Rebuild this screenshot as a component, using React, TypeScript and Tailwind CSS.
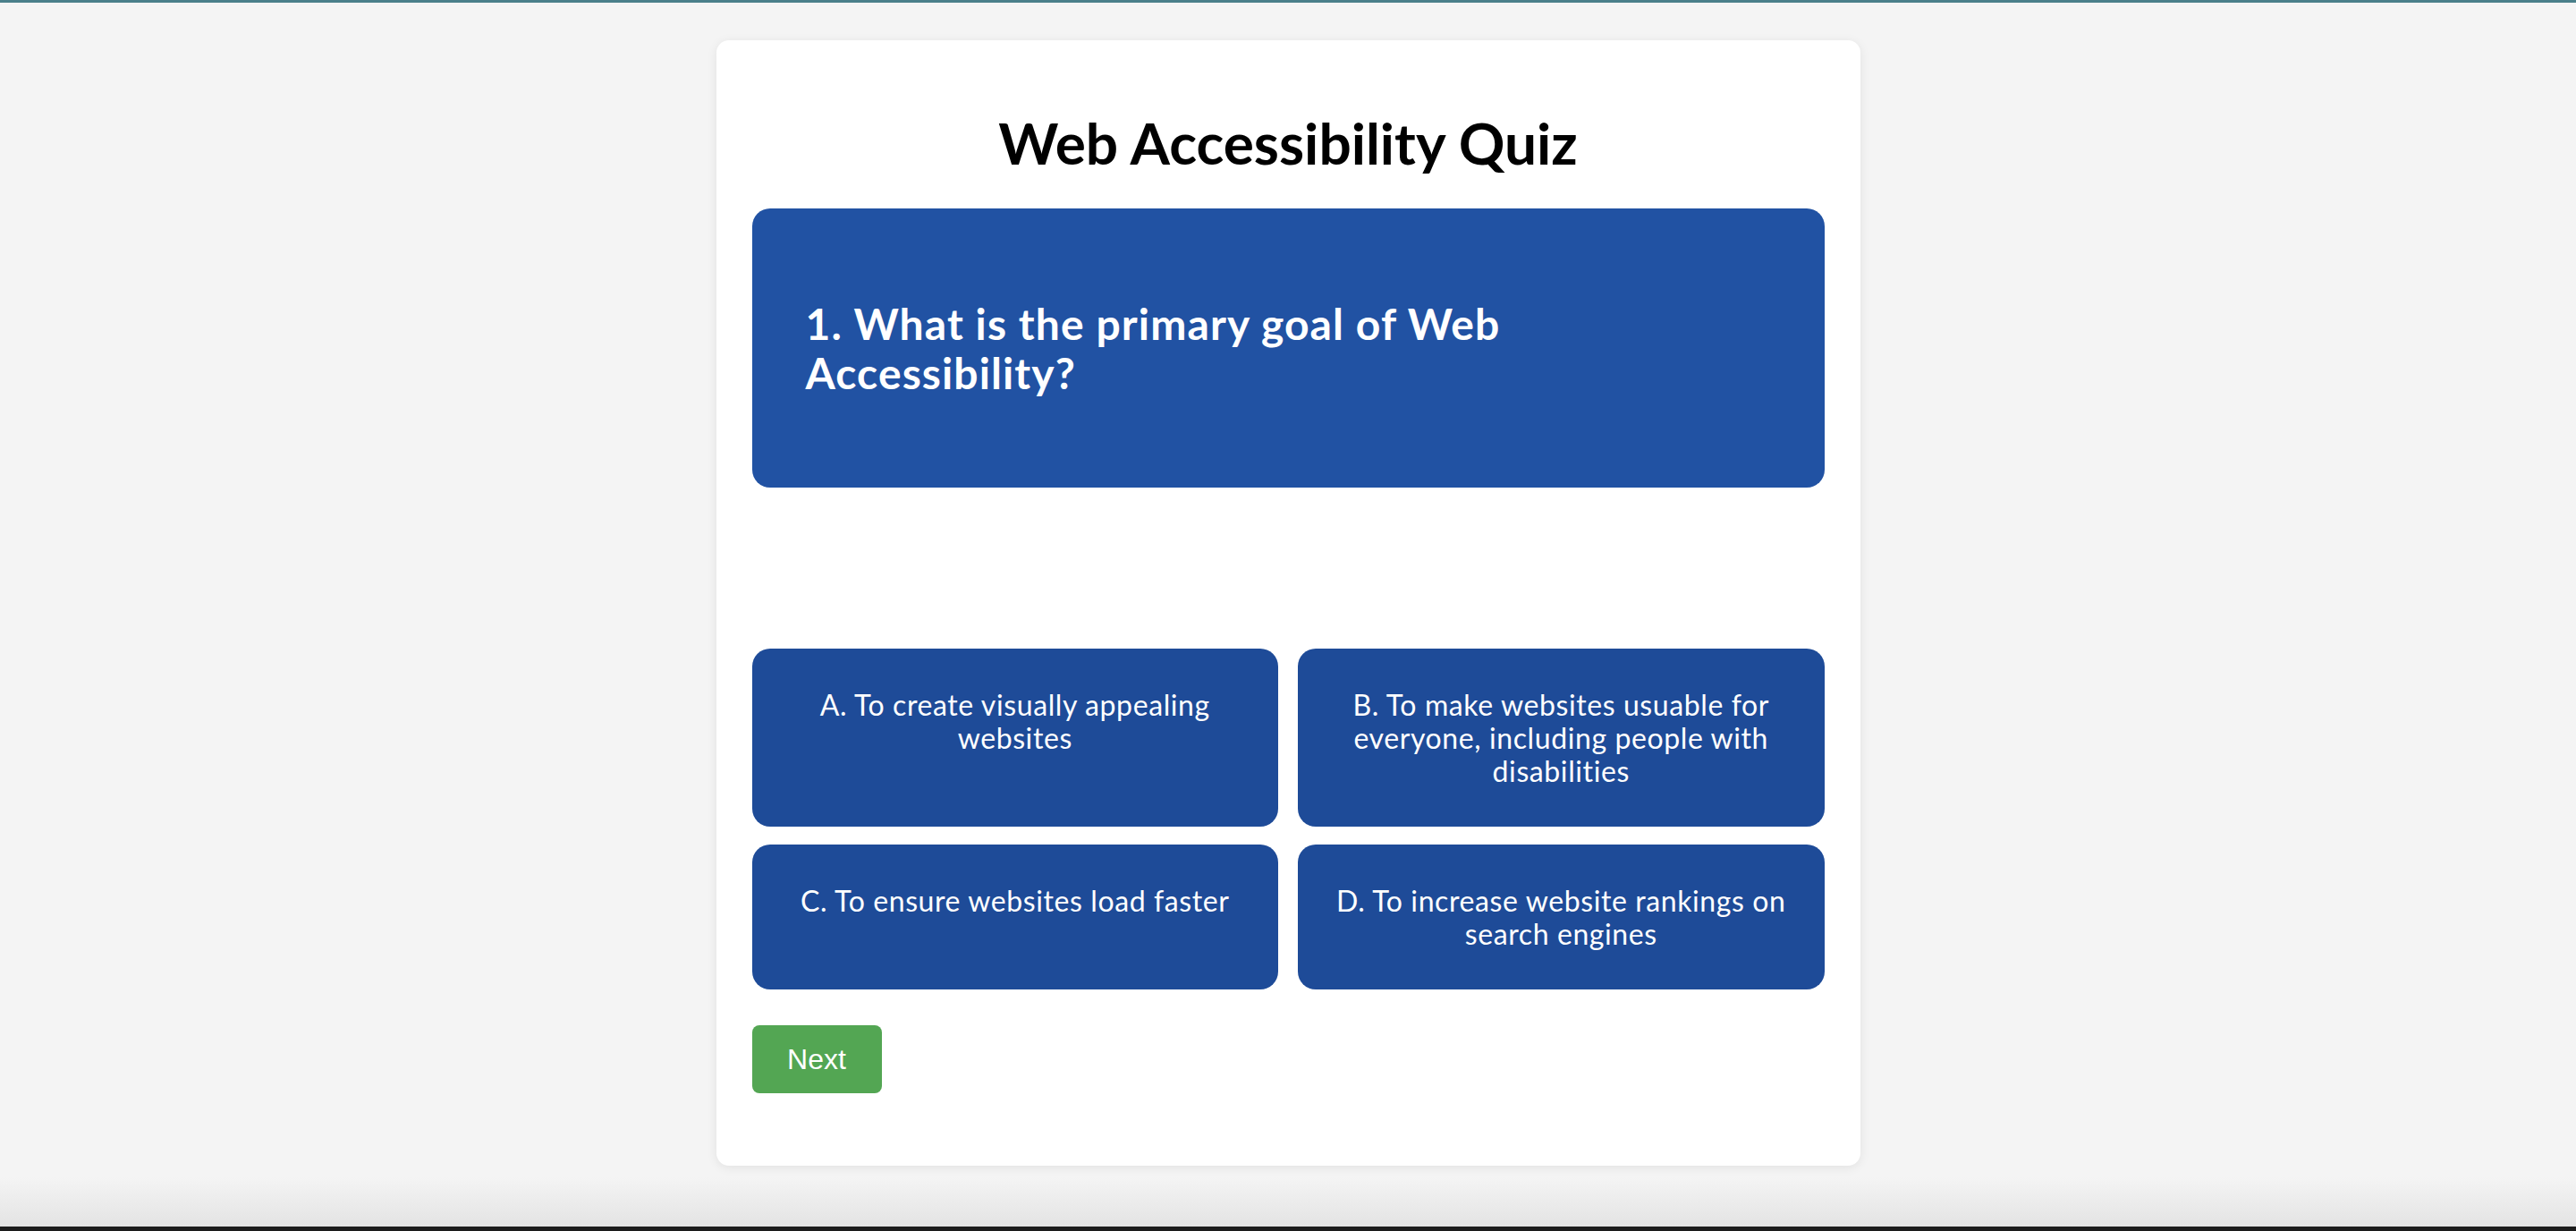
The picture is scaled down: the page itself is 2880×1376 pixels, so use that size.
const options = [
  "A. To create visually appealing websites",
  "B. To make websites usuable for everyone, including people with disabilities",
  "C. To ensure websites load faster",
  "D. To increase website rankings on search engines",
];

export default function App() {
  return (
    <div className="relative min-h-screen bg-[#f4f4f4] pt-[42px] pb-[72px] border-t-[3px] border-[#4a7f8a] font-['Lato','Open_Sans',sans-serif]">
      <div className="mx-auto w-[1279px] rounded-[14px] bg-white px-10 pt-[40px] pb-[81px] shadow-[0_2px_12px_rgba(0,0,0,0.08)]">
        <h1 className="text-center text-[64px] font-bold leading-[77px] text-black mt-[36px] mb-[35px]">
          Web Accessibility Quiz
        </h1>

        {/* Question */}
        <div className="flex h-[312px] items-center rounded-[20px] bg-[#2152a3] px-[60px]">
          <h2 className="max-w-[900px] text-[48px] font-bold leading-[55px] tracking-[1.1px] text-white">
            1. What is the primary goal of Web Accessibility?
          </h2>
        </div>

        {/* Answers */}
        <div className="mt-[180px] grid grid-cols-2 gap-x-[22px] gap-y-[20px]">
          {options.map((opt) => (
            <button
              key={opt}
              className="flex items-start justify-center rounded-[20px] bg-[#1e4b98] px-[40px] py-[44px] text-center text-[32px] leading-[37px] tracking-[0.6px] text-white font-['Lato','Open_Sans',sans-serif]"
            >
              {opt}
            </button>
          ))}
        </div>

        <button className="mt-[40px] h-[76px] w-[145px] rounded-[8px] bg-[#53a653] text-[32px] text-white font-['Liberation_Sans',Arial,sans-serif]">
          Next
        </button>
      </div>
      <div className="absolute inset-x-0 bottom-0 h-[60px] bg-gradient-to-b from-transparent to-[#e2e2e2]" />
      <div className="absolute inset-x-0 bottom-0 h-[5px] bg-[#1c1c1c]" />
    </div>
  );
}
